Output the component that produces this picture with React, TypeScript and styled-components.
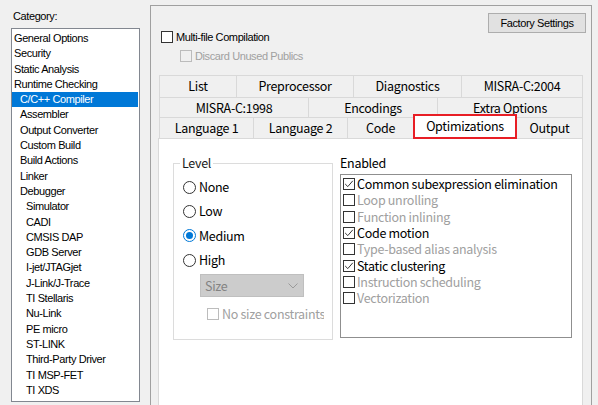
import styled, { createGlobalStyle } from 'styled-components';

const uiFont = `'Noto Sans CJK SC', 'Noto Sans', sans-serif`;

const GlobalStyle = createGlobalStyle`
  html, body {
    margin: 0;
    padding: 0;
    background: #f0f0f0;
  }
  * {
    box-sizing: border-box;
  }
`;

const Window = styled.div`
  display: flex;
  width: 598px;
  height: 405px;
  overflow: hidden;
  background: #f0f0f0;
  font-family: 'Liberation Sans', Arial, sans-serif;
  font-size: 11px;
  letter-spacing: -0.4px;
  color: #000;
`;

/* left column: category tree */
const Sidebar = styled.div`
  width: 150px;
  flex-shrink: 0;
  padding: 9px 0 0 11px;
`;

const SideLabel = styled.div`
  line-height: 14px;
  padding-left: 2px;
  margin-bottom: 5px;
`;

const CategoryList = styled.ul`
  list-style: none;
  margin: 0;
  padding: 2px 0 0 0;
  width: 129px;
  height: 374px;
  border: 1px solid #828790;
  background: #fff;
`;

const CategoryItem = styled.li<{ $level: number; $selected?: boolean }>`
  height: 15.3px;
  line-height: 15.3px;
  margin-right: 1px;
  padding-left: ${(p) => 2 + p.$level * 6}px;
  white-space: nowrap;
  background: ${(p) => (p.$selected ? '#0078d7' : 'transparent')};
  color: ${(p) => (p.$selected ? '#fff' : '#000')};
`;

/* right side */
const Main = styled.div`
  flex: 1;
  display: flex;
  padding: 5px 6px 0 0;
`;

const Panel = styled.div`
  flex: 1;
  display: flex;
  flex-direction: column;
  border: 1px solid #a0a0a0;
  border-bottom: none;
`;

const TopArea = styled.div`
  display: flex;
  justify-content: space-between;
  align-items: flex-start;
  height: 69px;
  padding: 7px 5px 0 10px;
`;

const Options = styled.div`
  display: flex;
  flex-direction: column;
  gap: 5px;
  padding-top: 17px;
`;

const OptionRow = styled.label<{ $indent?: number; $disabled?: boolean }>`
  display: flex;
  align-items: center;
  gap: 3px;
  height: 14px;
  padding-left: ${(p) => p.$indent ?? 0}px;
  color: ${(p) => (p.$disabled ? '#a0a0a0' : '#000')};
`;

const Button = styled.button`
  width: 98px;
  height: 20px;
  padding: 0;
  border: 1px solid #adadad;
  background: #e1e1e1;
  font-family: inherit;
  font-size: 11px;
  letter-spacing: -0.4px;
  color: #000;
`;

const Box = styled.span<{ $disabled?: boolean }>`
  display: inline-flex;
  align-items: center;
  justify-content: center;
  flex-shrink: 0;
  width: 12px;
  height: 12px;
  border: 1px solid ${(p) => (p.$disabled ? '#bcbcbc' : '#333')};
  background: ${(p) => (p.$disabled ? 'transparent' : '#fff')};
`;

const TabControl = styled.div`
  flex: 1;
  display: flex;
  flex-direction: column;
  width: 425px;
  margin-left: 7px;
  font-family: ${uiFont};
  font-size: 12.5px;
  letter-spacing: -0.3px;
  line-height: 16px;
`;

const TabRow = styled.div<{ $h: number }>`
  display: flex;
  height: ${(p) => p.$h}px;
  padding-left: 1px;
`;

const Tab = styled.div<{ $w: number; $active?: boolean }>`
  width: ${(p) => p.$w}px;
  flex-shrink: 0;
  text-align: center;
  white-space: nowrap;
  background: #f0f0f0;
  border-top: 1px solid #d9d9d9;
  border-right: 1px solid #d9d9d9;
  line-height: 19px;

  &:first-child {
    border-left: 1px solid #d9d9d9;
  }

  ${(p) =>
    p.$active &&
    `
    position: relative;
    z-index: 1;
    width: ${p.$w + 1}px;
    height: calc(100% + 4px);
    margin: -3px 0 -1px -1px;
    background: #fff;
    border: 2px solid #e81e25 !important;
    line-height: 20px;
  `}
`;

const TabPage = styled.div`
  flex: 1;
  display: flex;
  align-items: flex-start;
  gap: 7px;
  padding: 16px 0 0 14px;
  background: #fff;
  border: 1px solid #d9d9d9;
  border-bottom: none;
`;

const Group = styled.fieldset`
  width: 160px;
  height: 185px;
  margin: 0;
  padding: 4px 0 0 9px;
  border: 1px solid #dcdcdc;
`;

const Legend = styled.legend`
  margin-left: -3px;
  padding: 0 2px;
  line-height: 16px;
  color: #1a1a1a;
`;

const RadioRow = styled.label`
  display: flex;
  align-items: center;
  gap: 3px;
  height: 24.3px;
  line-height: 14px;
`;

const Radio = styled.span<{ $checked?: boolean }>`
  display: inline-flex;
  align-items: center;
  justify-content: center;
  width: 13px;
  height: 13px;
  border-radius: 50%;
  border: 1px solid ${(p) => (p.$checked ? '#0078d7' : '#333')};
  background: #fff;

  &::after {
    content: '';
    display: ${(p) => (p.$checked ? 'block' : 'none')};
    width: 7px;
    height: 7px;
    border-radius: 50%;
    background: #0078d7;
  }
`;

const Combo = styled.div`
  display: flex;
  align-items: center;
  justify-content: space-between;
  width: 104px;
  height: 23px;
  margin: 2px 0 0 17px;
  padding: 0 5px 0 4px;
  background: #cccccc;
  border: 1px solid #bfbfbf;
  color: #838383;
`;

const SubOption = styled.label`
  display: flex;
  align-items: center;
  gap: 3px;
  height: 14px;
  margin: 10px 0 0 24px;
  color: #a0a0a0;
`;

const ClipText = styled.span`
  width: 102px;
  overflow: hidden;
  white-space: nowrap;
  line-height: 14px;
`;

const EnabledColumn = styled.div`
  display: flex;
  flex-direction: column;
`;

const ColumnLabel = styled.div`
  line-height: 16px;
  margin-bottom: 3px;
`;

const CheckList = styled.div`
  width: 232px;
  height: 164px;
  padding: 1px 0 0 2px;
  border: 1px solid #8f8f8f;
`;

const CheckItem = styled.label<{ $dim?: boolean }>`
  display: flex;
  align-items: center;
  gap: 2px;
  height: 16.3px;
  line-height: 14px;
  white-space: nowrap;
  color: ${(p) => (p.$dim ? '#a0a0a0' : '#000')};
`;

const Check = () => (
  <svg width="10" height="10" viewBox="0 0 10 10">
    <polyline points="1.2,5 3.8,7.6 8.8,1.8" fill="none" stroke="#333" strokeWidth="1" />
  </svg>
);

const categories: { name: string; level: number }[] = [
  { name: 'General Options', level: 0 },
  { name: 'Security', level: 0 },
  { name: 'Static Analysis', level: 0 },
  { name: 'Runtime Checking', level: 0 },
  { name: 'C/C++ Compiler', level: 1 },
  { name: 'Assembler', level: 1 },
  { name: 'Output Converter', level: 1 },
  { name: 'Custom Build', level: 1 },
  { name: 'Build Actions', level: 1 },
  { name: 'Linker', level: 1 },
  { name: 'Debugger', level: 1 },
  { name: 'Simulator', level: 2 },
  { name: 'CADI', level: 2 },
  { name: 'CMSIS DAP', level: 2 },
  { name: 'GDB Server', level: 2 },
  { name: 'I-jet/JTAGjet', level: 2 },
  { name: 'J-Link/J-Trace', level: 2 },
  { name: 'TI Stellaris', level: 2 },
  { name: 'Nu-Link', level: 2 },
  { name: 'PE micro', level: 2 },
  { name: 'ST-LINK', level: 2 },
  { name: 'Third-Party Driver', level: 2 },
  { name: 'TI MSP-FET', level: 2 },
  { name: 'TI XDS', level: 2 },
];

const tabRows: { h: number; tabs: [string, number][] }[] = [
  { h: 22, tabs: [['List', 78], ['Preprocessor', 117], ['Diagnostics', 108], ['MISRA-C:2004', 121]] },
  { h: 20, tabs: [['MISRA-C:1998', 150], ['Encodings', 129], ['Extra Options', 145]] },
  {
    h: 21,
    tabs: [['Language 1', 95], ['Language 2', 94], ['Code', 66], ['Optimizations', 103], ['Output', 66]],
  },
];

const optimizations: [string, boolean][] = [
  ['Common subexpression elimination', true],
  ['Loop unrolling', false],
  ['Function inlining', false],
  ['Code motion', true],
  ['Type-based alias analysis', false],
  ['Static clustering', true],
  ['Instruction scheduling', false],
  ['Vectorization', false],
];

const levels = ['None', 'Low', 'Medium', 'High'];

export default function App() {
  return (
    <>
      <GlobalStyle />
      <Window>
        <Sidebar>
          <SideLabel>Category:</SideLabel>
          <CategoryList>
            {categories.map((c) => (
              <CategoryItem key={c.name} $level={c.level} $selected={c.name === 'C/C++ Compiler'}>
                {c.name}
              </CategoryItem>
            ))}
          </CategoryList>
        </Sidebar>

        <Main>
          <Panel>
            <TopArea>
              <Options>
                <OptionRow>
                  <Box />
                  Multi-file Compilation
                </OptionRow>
                <OptionRow $indent={19} $disabled>
                  <Box $disabled />
                  Discard Unused Publics
                </OptionRow>
              </Options>
              <Button>Factory Settings</Button>
            </TopArea>

            <TabControl>
              {tabRows.map((row, i) => (
                <TabRow key={i} $h={row.h}>
                  {row.tabs.map(([label, w]) => (
                    <Tab key={label} $w={w} $active={label === 'Optimizations'}>
                      {label}
                    </Tab>
                  ))}
                </TabRow>
              ))}

              <TabPage>
                <Group>
                  <Legend>Level</Legend>
                  {levels.map((l) => (
                    <RadioRow key={l}>
                      <Radio $checked={l === 'Medium'} />
                      {l}
                    </RadioRow>
                  ))}
                  <Combo>
                    Size
                    <svg width="10" height="6" viewBox="0 0 10 6">
                      <polyline points="0.5,0.5 5,5 9.5,0.5" fill="none" stroke="#9a9a9a" strokeWidth="1" />
                    </svg>
                  </Combo>
                  <SubOption>
                    <Box $disabled />
                    <ClipText>No size constraints</ClipText>
                  </SubOption>
                </Group>

                <EnabledColumn>
                  <ColumnLabel>Enabled</ColumnLabel>
                  <CheckList>
                    {optimizations.map(([label, on]) => (
                      <CheckItem key={label} $dim={!on}>
                        <Box>{on && <Check />}</Box>
                        {label}
                      </CheckItem>
                    ))}
                  </CheckList>
                </EnabledColumn>
              </TabPage>
            </TabControl>
          </Panel>
        </Main>
      </Window>
    </>
  );
}
